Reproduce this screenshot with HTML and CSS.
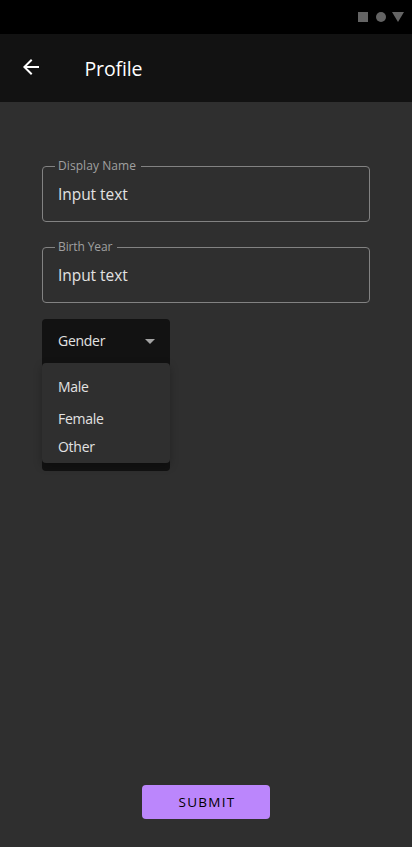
FILE: index.html
```html
<!DOCTYPE html>
<html lang="en">
<head>
<meta charset="utf-8">
<title>Profile</title>
<link rel="stylesheet" href="styles.css">
</head>
<body>
<div class="status">
  <svg width="46" height="10" viewBox="0 0 46 10" fill="#646464"><path d="M0 0h10v10H0z"/><circle cx="23" cy="5" r="5"/><path d="M34 0h12l-6 10z"/></svg>
</div>
<header class="bar">
  <svg class="back" width="16" height="16" viewBox="4 4 16 16" fill="#fff"><path d="M20 11H7.83l5.59-5.59L12 4l-8 8 8 8 1.41-1.41L7.83 13H20v-2z"/></svg>
  <h1 class="title">Profile</h1>
</header>
<main class="form">
  <div class="field">
    <div class="notch name"><span class="label">Display Name</span></div>
    <div class="value">Input text</div>
  </div>
  <div class="field">
    <div class="notch year"><span class="label">Birth Year</span></div>
    <div class="value">Input text</div>
  </div>
  <div class="select">
    <div class="head"><span class="gender">Gender</span><svg width="10" height="5" viewBox="0 0 10 5" fill="#a3a3a3"><path d="M0 0h10L5 5z"/></svg></div>
    <ul class="menu">
      <li class="male">Male</li>
      <li class="female">Female</li>
      <li class="other">Other</li>
    </ul>
  </div>
  <button class="submit">SUBMIT</button>
</main>
</body>
</html>
```
FILE: styles.css
```css
* { box-sizing: border-box; }
body {
  margin: 0;
  height: 847px;
  display: flex;
  flex-direction: column;
  background: #2f2f2f;
  color: #e2e2e2;
  font-family: "Open Sans", sans-serif;
  overflow: hidden;
}
.status {
  height: 34px;
  padding: 12px 8px 0 0;
  display: flex;
  justify-content: flex-end;
  align-items: flex-start;
  background: #000;
}
.bar {
  height: 68px;
  padding-left: 23px;
  display: flex;
  align-items: flex-start;
  background: #121212;
}
.back { margin-top: 25px; }
.title {
  margin: 21px 0 0 45.5px;
  font-size: 19.5px;
  line-height: 28px;
  font-weight: 400;
  letter-spacing: -0.15px;
  color: #fff;
}
.form {
  flex: 1;
  padding: 64px 42px 28px;
  display: flex;
  flex-direction: column;
}
.field {
  height: 56px;
  margin-bottom: 25px;
  padding-left: 12px;
  border: 1px solid #828282;
  border-radius: 4px;
}
.notch {
  height: 16px;
  margin-top: -9px;
  padding-left: 3px;
  background: #2f2f2f;
  font-size: 12px;
  line-height: 16px;
  color: #a0a0a0;
}
.name { width: 86px; letter-spacing: 0.07px; }
.year { width: 62px; letter-spacing: -0.12px; }
.value {
  margin: 8px 0 0 3px;
  font-size: 15.5px;
  line-height: 24px;
  letter-spacing: -0.05px;
}
.select {
  width: 128px;
  height: 152px;
  margin-top: -9px;
  border-radius: 4px;
  background: #121212;
  font-size: 14px;
  line-height: 20px;
  letter-spacing: -0.28px;
}
.head {
  height: 44px;
  padding: 0 15px 0 16px;
  display: flex;
  align-items: center;
  justify-content: space-between;
}
.menu {
  height: 100px;
  margin: 0;
  padding: 14px 0 0 16px;
  list-style: none;
  border-radius: 4px;
  background: #2f2f2f;
  box-shadow: 0 3px 8px rgba(0, 0, 0, 0.25);
}
.male { height: 32px; }
.female { height: 28px; }
.submit {
  width: 128px;
  height: 34px;
  margin: auto auto 0;
  padding: 0 0 0 2px;
  border: 0;
  border-radius: 4px;
  background: #bb86fc;
  color: #000;
  font: 13.5px/34px "Open Sans", sans-serif;
  letter-spacing: 1.25px;
}
```
